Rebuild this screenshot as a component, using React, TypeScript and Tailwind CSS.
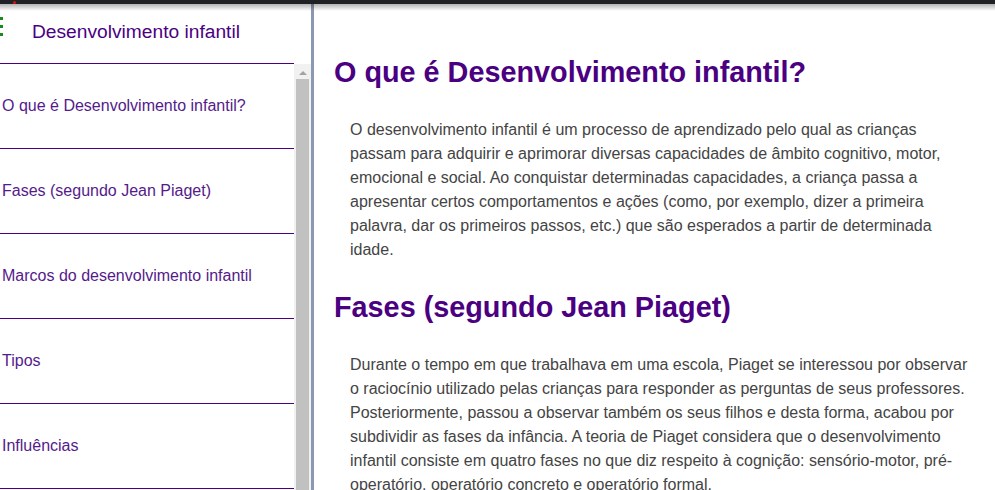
const links = [
  'O que é Desenvolvimento infantil?',
  'Fases (segundo Jean Piaget)',
  'Marcos do desenvolvimento infantil',
  'Tipos',
  'Influências',
];

const sections = [
  {
    title: 'O que é Desenvolvimento infantil?',
    text: 'O desenvolvimento infantil é um processo de aprendizado pelo qual as crianças passam para adquirir e aprimorar diversas capacidades de âmbito cognitivo, motor, emocional e social. Ao conquistar determinadas capacidades, a criança passa a apresentar certos comportamentos e ações (como, por exemplo, dizer a primeira palavra, dar os primeiros passos, etc.) que são esperados a partir de determinada idade.',
  },
  {
    title: 'Fases (segundo Jean Piaget)',
    text: 'Durante o tempo em que trabalhava em uma escola, Piaget se interessou por observar o raciocínio utilizado pelas crianças para responder as perguntas de seus professores. Posteriormente, passou a observar também os seus filhos e desta forma, acabou por subdividir as fases da infância. A teoria de Piaget considera que o desenvolvimento infantil consiste em quatro fases no que diz respeito à cognição: sensório-motor, pré-operatório, operatório concreto e operatório formal.',
  },
];

function Scrollbar() {
  return (
    <div className="w-[17px] h-full bg-[#f1f1f1] flex flex-col items-center">
      <div className="h-[16px] w-full flex items-center justify-center pt-[2px]">
        <div className="w-0 h-0 border-l-[4px] border-r-[4px] border-b-[4px] border-l-transparent border-r-transparent border-b-[#a3a3a3]" />
      </div>
      <div className="flex-1 w-[13px] mt-[-1px] bg-[#c1c1c1]" />
    </div>
  );
}

export default function App() {
  return (
    <div
      className="relative w-[995px] h-[490px] overflow-hidden bg-white flex flex-col"
      style={{ fontFamily: '"Liberation Sans", Arial, sans-serif' }}
    >
      {/* browser chrome edge */}
      <div className="h-[4px] bg-[#202124] shrink-0 relative">
        <span className="absolute left-[13px] top-[1px] w-[3px] h-[3px] rounded-full bg-[#e01010]" />
      </div>
      <div className="absolute left-0 right-0 top-[4px] h-[7px] bg-gradient-to-b from-black/30 to-transparent pointer-events-none z-10" />

      <div className="flex flex-1 min-h-0">
        {/* sidebar */}
        <aside className="w-[311px] shrink-0 flex flex-col">
          <div className="flex h-[60px] shrink-0">
            <div className="relative w-[294px] border-b border-[#4b0082] flex items-center pl-[32px] pb-[2px]">
              <div className="absolute left-0 top-[13px] flex flex-col gap-[5px]">
                <span className="w-[3px] h-[3px] bg-[#1a8a1a]" />
                <span className="w-[3px] h-[3px] bg-[#1a8a1a]" />
                <span className="w-[3px] h-[3px] bg-[#1a8a1a]" />
              </div>
              <h3 className="text-[19.2px] text-[#4b0082]">Desenvolvimento infantil</h3>
            </div>
            <div className="flex-1" />
          </div>
          <div className="flex flex-1 min-h-0">
            <nav className="w-[294px] overflow-hidden">
              <ul>
                {links.map((l) => (
                  <li key={l} className="h-[85px] border-b border-[#4b0082] flex items-center pl-[2px]">
                    <a className="text-[16px] text-[#551a8b]">{l}</a>
                  </li>
                ))}
              </ul>
            </nav>
            <Scrollbar />
          </div>
        </aside>

        <div className="w-[3px] shrink-0 bg-[#8a98b0]" />

        {/* main content */}
        <main className="flex-1 overflow-hidden px-[20px] pt-[52px] flex flex-col gap-[29.5px]">
          {sections.map((s) => (
            <section key={s.title} className="flex flex-col gap-[29.5px]">
              <h2 className="text-[28.8px] leading-[32px] font-bold text-[#4b0082]">{s.title}</h2>
              <p className="pl-[16px] text-[16px] leading-[24px] text-[#444]">{s.text}</p>
            </section>
          ))}
        </main>
      </div>
    </div>
  );
}
